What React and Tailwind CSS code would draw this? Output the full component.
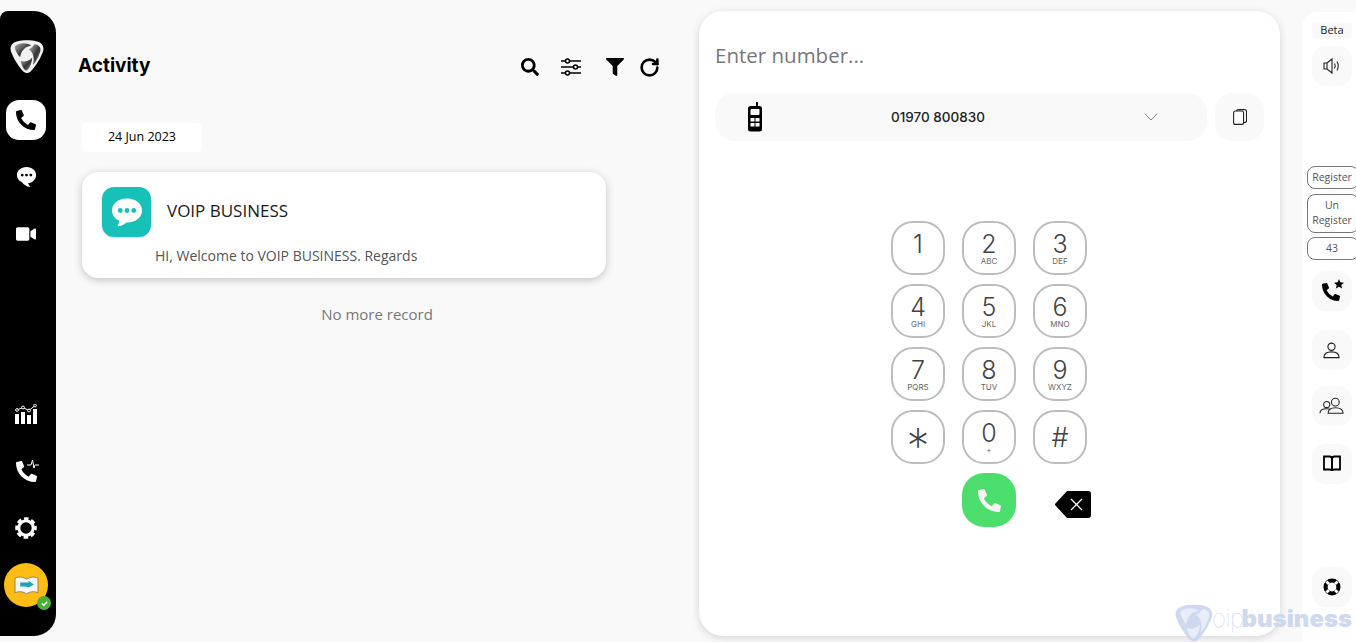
import { FaPhoneAlt, FaVideo, FaSearch, FaFilter } from 'react-icons/fa';
import { RotateCw, ChevronDown } from 'lucide-react';

const body = { fontFamily: '"Open Sans", "Noto Sans", sans-serif' };
const heading = { fontFamily: 'Inter, "Noto Sans", sans-serif' };

const keys = [
  ['1', '\u00a0'], ['2', 'ABC'], ['3', 'DEF'],
  ['4', 'GHI'], ['5', 'JKL'], ['6', 'MNO'],
  ['7', 'PQRS'], ['8', 'TUV'], ['9', 'WXYZ'],
  ['*', ''], ['0', '+'], ['#', ''],
];

// three blade logo, used in the sidebar and the watermark
const Logo = ({ className, light }) => (
  <svg viewBox="0 0 40 40" className={className}>
    <defs>
      <linearGradient id="blade" x1="0" y1="0" x2="1" y2="1">
        <stop offset="0" stopColor="#b5b5b5" />
        <stop offset="0.55" stopColor="#333" />
        <stop offset="1" stopColor="#999" />
      </linearGradient>
    </defs>
    <path
      d="M9 2 C15 0.500 25 0.500 31 2 C38 3.500 41 9 38.500 15 C35 24 29 33 24 38 C21.500 40 18.500 40 16 38 C11 33 5 24 1.500 15 C-1 9 2 3.500 9 2 Z"
      fill={light ? '#c9d5ef' : '#f2f2f2'}
    />
    <path d="M6 8 C10 3.500 20 3.500 25 7 C19 8 13 12 12 21 C9 18 5 12 6 8 Z" fill={light ? '#e6ecf9' : 'url(#blade)'} />
    <path d="M29 5.500 C35 6 37.500 11 35 16 C33 22 30 27 27 30 C29 23 28 15 22 11.500 C25 10.500 27 8 29 5.500 Z" fill={light ? '#e6ecf9' : 'url(#blade)'} />
    <path d="M12.500 25 C16 27 22 26 26 21.500 C26 27 23.500 33 20.500 36 C19 37 17.500 36 16 34 C14 31 13 28 12.500 25 Z" fill={light ? '#e6ecf9' : 'url(#blade)'} />
  </svg>
);

const ChatDots = ({ className, dot }) => (
  <svg viewBox="0 0 24 24" className={className}>
    <path d="M12 2 C18 2 22 5.800 22 10.500 C22 15.200 18 19 13.500 19 L16 23 C12 22.500 9 20.500 7.300 18 C4 16.600 2 13.800 2 10.500 C2 5.800 6 2 12 2 Z" fill="#fff" />
    <circle cx="7.500" cy="10.500" r="1.500" fill={dot} />
    <circle cx="12" cy="10.500" r="1.500" fill={dot} />
    <circle cx="16.500" cy="10.500" r="1.500" fill={dot} />
  </svg>
);

const Chart = () => (
  <svg viewBox="0 0 22 20" className="w-[22px] h-[20px]" fill="#fff">
    <rect x="0" y="10" width="4" height="10" />
    <rect x="6" y="8" width="4" height="12" />
    <rect x="12" y="11" width="4" height="9" />
    <rect x="18" y="5" width="4" height="15" />
    <path d="M2 6 L8 3.500 L14 6.500 L20 1.500" stroke="#fff" strokeWidth="1" fill="none" />
    <circle cx="2" cy="6" r="1.400" fill="#000" stroke="#fff" />
    <circle cx="8" cy="3.500" r="1.400" fill="#000" stroke="#fff" />
    <circle cx="14" cy="6.500" r="1.400" fill="#000" stroke="#fff" />
    <circle cx="20" cy="1.500" r="1.400" fill="#000" stroke="#fff" />
  </svg>
);

const Gear = () => (
  <svg viewBox="0 0 22 22" className="w-[22px] h-[22px]" fill="none" stroke="#fff">
    <circle cx="11" cy="11" r="7.200" strokeWidth="3" />
    <circle cx="11" cy="11" r="9.300" strokeWidth="3" strokeDasharray="4.500 2.800" strokeDashoffset="2.250" />
  </svg>
);

const SideItem = ({ className, children }) => (
  <div className={`flex items-center justify-center ${className}`}>{children}</div>
);

const Sidebar = () => (
  <aside className="w-[56px] h-[625px] mt-[11px] bg-black rounded-tl-lg rounded-tr-[22px] rounded-br-[22px] flex flex-col items-center shrink-0 pr-[4px]">
    <SideItem className="mt-[28px] h-[34px] w-[34px] ml-[2px]">
      <Logo className="w-[35px] h-[35px]" />
    </SideItem>
    <SideItem className="mt-[27px] w-[40px] h-[40px] bg-white rounded-[13px]">
      <FaPhoneAlt className="text-[20px] text-black" />
    </SideItem>
    <SideItem className="mt-[24px] h-[24px] w-[24px]">
      <ChatDots className="w-[23px] h-[23px]" dot="#000" />
    </SideItem>
    <SideItem className="mt-[34px] h-[24px] w-[24px]">
      <FaVideo className="text-[20px] text-white" />
    </SideItem>
    <SideItem className="mt-[156px] h-[24px] w-[24px]">
      <Chart />
    </SideItem>
    <SideItem className="mt-[33px] h-[24px] w-[24px] relative">
      <FaPhoneAlt className="text-[21px] text-white" />
      <svg viewBox="0 0 12 12" className="absolute -top-[1px] -right-[1px] w-[12px] h-[12px]">
        <path d="M0 7 L4 7 L5.500 2 L7 10 L8 7 L12 7" stroke="#fff" strokeWidth="1" fill="none" />
      </svg>
    </SideItem>
    <SideItem className="mt-[33px] h-[24px] w-[24px]">
      <Gear />
    </SideItem>
    <div className="mt-[23px] relative w-[44px] h-[44px] rounded-full bg-[#fdbd13] flex items-center justify-center">
      <svg viewBox="0 0 24 20" className="w-[25px] h-[21px]">
        <path d="M1 3 C5 1 9 2 12 4 C15 2 19 1 23 3 L23 17 C19 15 15 16 12 18 C9 16 5 15 1 17 Z" fill="#f5f5f5" stroke="#555" strokeWidth="0.6" />
        <path d="M6 7 L14 7 L14 5.500 L19 9 L14 12 L11 11 L6 11 Z" fill="#17a7b8" />
      </svg>
      <div className="absolute -right-[3px] bottom-[-3px] w-[14px] h-[14px] rounded-full bg-[#4caf3a] flex items-center justify-center">
        <svg viewBox="0 0 10 10" className="w-[9px] h-[9px]">
          <path d="M2 5 L4.200 7 L8 3" stroke="#fff" strokeWidth="1.400" fill="none" />
        </svg>
      </div>
    </div>
  </aside>
);

const SlidersIcon = () => (
  <svg viewBox="0 0 20 18" className="w-[20px] h-[18px]" fill="none" stroke="#000" strokeWidth="1.500">
    <path d="M0 3 H4 M9 3 H20 M0 9 H12 M17 9 H20 M0 15 H4 M9 15 H20" />
    <circle cx="6.500" cy="3" r="2" />
    <circle cx="14.500" cy="9" r="2" />
    <circle cx="6.500" cy="15" r="2" />
  </svg>
);

const Activity = () => (
  <main className="w-[643px] shrink-0 pl-[22px]" style={body}>
    <header className="flex items-center h-[30px] mt-[51px]">
      <h1 className="text-[19px] font-bold text-black" style={heading}>Activity</h1>
      <div className="flex items-center ml-[371px] pt-[2px]">
        <FaSearch className="text-[18px] text-black" />
        <span className="ml-[22px]"><SlidersIcon /></span>
        <FaFilter className="ml-[25px] text-[18px] text-black" />
        <RotateCw className="ml-[15px] w-[21px] h-[21px] text-black" strokeWidth={3} />
      </div>
    </header>
    <div className="ml-[4px] mt-[42px] w-[120px] h-[29px] bg-white rounded-sm flex items-center justify-center text-[12.5px] font-medium text-black">
      24 Jun 2023
    </div>
    <article className="ml-[4px] mt-[20px] w-[524px] h-[106px] bg-white rounded-2xl shadow-[0_2px_8px_rgba(0,0,0,0.22)] pt-[15px] pl-[20px]">
      <div className="flex items-center">
        <div className="w-[49px] h-[50px] rounded-xl bg-[#17c1b8] flex items-center justify-center shadow-sm">
          <svg viewBox="0 0 24 24" className="w-[36px] h-[36px]">
            <path d="M12 3 C18 3 22 6.500 22 11 C22 15.500 18 19 12 19 L11.500 19 C10 20.500 8 21.500 5.500 21.500 C6.300 20.500 6.800 19 6.700 17.800 C3.800 16.400 2 13.900 2 11 C2 6.500 6 3 12 3 Z" fill="#fff" />
            <circle cx="7.500" cy="11" r="1.600" fill="#17c1b8" />
            <circle cx="12" cy="11" r="1.600" fill="#17c1b8" />
            <circle cx="16.500" cy="11" r="1.600" fill="#17c1b8" />
          </svg>
        </div>
        <span className="ml-[16px] text-[17px] font-medium text-[#1a1a1a] -mt-[2px]">VOIP BUSINESS</span>
      </div>
      <p className="ml-[53px] mt-[8px] text-[14px] text-[#555]">HI, Welcome to VOIP BUSINESS. Regards</p>
    </article>
    <p className="mt-[25px] ml-[4px] w-[590px] text-center text-[15px] text-[#777]">No more record</p>
  </main>
);

const CandyPhone = () => (
  <svg viewBox="0 0 16 30" className="w-[16px] h-[30px]">
    <rect x="9" y="0" width="2" height="6" fill="#000" />
    <rect x="1" y="4" width="14" height="25.500" rx="2.500" fill="#000" />
    <rect x="3.500" y="7" width="9" height="6" rx="1" fill="#fff" />
    <rect x="3.500" y="16" width="4" height="3.500" fill="#fff" />
    <rect x="8.500" y="16" width="4" height="3.500" fill="#fff" />
    <rect x="3.500" y="21" width="4" height="3.500" fill="#fff" />
    <rect x="8.500" y="21" width="4" height="3.500" fill="#fff" />
  </svg>
);

const Key = ({ digit, sub }) => (
  <button className="w-[54px] h-[54px] rounded-[22px] border-2 border-[#bcbcbc] bg-white flex flex-col items-center justify-center text-[#444] pt-[2px]" style={{ fontFamily: 'Inter, sans-serif' }}>
    {digit === '*' ? (
      <span className="font-extralight text-[46px] h-[24px] leading-[24px] pt-[7px]">*</span>
    ) : (
      <span className={`font-light leading-[24px] ${digit === '#' ? 'text-[27px]' : 'text-[25px]'}`}>{digit}</span>
    )}
    {sub && <span className="text-[8px] leading-[9px] mt-[1px] text-[#666]">{sub}</span>}
  </button>
);

const Dialer = () => (
  <section className="w-[581px] h-[625px] mt-[11px] bg-white rounded-[24px] shadow-[0_2px_8px_rgba(0,0,0,0.15)] shrink-0 px-[16px] pt-[30px]" style={body}>
    <div className="h-[28px] flex items-center text-[20.5px] text-[#777]">Enter number...</div>
    <div className="mt-[24px] flex gap-[8px]">
      <div className="flex-1 h-[48px] bg-[#f9f9f9] rounded-[20px] flex items-center pl-[32px] pr-[44px]">
        <CandyPhone />
        <span className="flex-1 text-center text-[13.5px] font-medium text-[#222] mr-[26px]" style={heading}>01970 800830</span>
        <ChevronDown className="w-[24px] h-[24px] text-[#666]" strokeWidth={0.8} />
      </div>
      <div className="w-[49px] h-[48px] bg-[#f9f9f9] rounded-[18px] flex items-center justify-center">
        <svg viewBox="0 0 14 16" className="w-[14px] h-[16px]" fill="#fff" stroke="#222" strokeWidth="1.100">
          <rect x="3.500" y="0.600" width="10" height="13" rx="2" />
          <rect x="0.600" y="2" width="10" height="13.400" rx="2" />
        </svg>
      </div>
    </div>
    <div className="mt-[80px] ml-[176px] w-[196px] grid grid-cols-[54px_54px_54px] gap-x-[17px] gap-y-[9px]">
      {keys.map(([digit, sub]) => (
        <Key key={digit} digit={digit} sub={sub} />
      ))}
      <button className="col-start-2 w-[54px] h-[54px] rounded-[22px] bg-[#4cde6c] flex items-center justify-center">
        <FaPhoneAlt className="text-[23px] text-[#f3f3f3]" />
      </button>
      <div className="flex items-center ml-[22px] pt-[9px]">
        <svg viewBox="0 0 36 27" className="w-[36px] h-[27px] shrink-0">
          <path d="M12 0 H33 Q36 0 36 3 V24 Q36 27 33 27 H12 L0 14 Q-0.500 13.500 0 13 Z" fill="#000" />
          <path d="M16 8 L27 19 M27 8 L16 19" stroke="#fff" strokeWidth="1.300" />
        </svg>
      </div>
    </div>
  </section>
);

const RailButton = ({ className = '', children }) => (
  <div className={`w-[40px] h-[40px] ml-[10px] bg-[#f9f9f9] rounded-[14px] flex items-center justify-center ${className}`}>
    {children}
  </div>
);

const Pill = ({ className = '', children }) => (
  <div className={`w-[52px] ml-[5px] pr-[2px] border border-[#777] rounded-[8px] text-center text-[10.5px] leading-[15px] text-[#555] shrink-0 ${className}`}>
    {children}
  </div>
);

const StarPhone = () => (
  <div className="relative w-[20px] h-[20px]">
    <FaPhoneAlt className="text-[18px] text-black absolute left-0 bottom-0" />
    <svg viewBox="0 0 10 10" className="absolute -top-[2px] -right-[2px] w-[10px] h-[10px]">
      <path d="M5 0 L6.400 3.300 L10 3.700 L7.300 6 L8.100 9.500 L5 7.700 L1.900 9.500 L2.700 6 L0 3.700 L3.600 3.300 Z" fill="#000" />
    </svg>
  </div>
);

const Person = () => (
  <svg viewBox="0 0 18 18" className="w-[17px] h-[17px] -ml-[1px]" fill="none" stroke="#222" strokeWidth="1.200">
    <circle cx="9" cy="5" r="3.800" />
    <path d="M1 16.500 C1 12 5 10.500 9 10.500 C13 10.500 17 12 17 16.500 Z" />
  </svg>
);

const Group = () => (
  <svg viewBox="0 0 26 18" className="w-[25px] h-[18px] -ml-[1px]" fill="none" stroke="#222" strokeWidth="1.100">
    <circle cx="8" cy="7.500" r="3.200" />
    <path d="M1 16.500 C1 13 4 11.800 8 11.800 C10 11.800 11 12.200 12 13" />
    <circle cx="17" cy="5" r="4" />
    <path d="M9.500 16.500 C9.500 12 13 10.800 17 10.800 C21 10.800 25 12 25 16.500 Z" />
  </svg>
);

const Book = () => (
  <svg viewBox="0 0 18 18" className="w-[18px] h-[18px]" fill="none" stroke="#000" strokeWidth="1.800">
    <path d="M1 1.500 H6.500 Q9 1.500 9 4 V16 Q9 14.500 6.500 14.500 H1 Z" />
    <path d="M17 1.500 H11.500 Q9 1.500 9 4 V16 Q9 14.500 11.500 14.500 H17 Z" />
  </svg>
);

const Lifebuoy = () => (
  <svg viewBox="0 0 18 18" className="w-[18px] h-[18px]">
    <circle cx="9" cy="9" r="8.500" fill="#000" />
    <circle cx="9" cy="9" r="4.400" fill="#fff" />
    <path d="M3.400 3.400 L6 6 M14.600 3.400 L12 6 M3.400 14.600 L6 12 M14.600 14.600 L12 12" stroke="#fff" strokeWidth="2.800" />
  </svg>
);

const Rail = () => (
  <aside className="w-[54px] h-[630px] mt-[12px] ml-[22px] bg-white rounded-tl-[16px] flex flex-col shrink-0" style={body}>
    <div className="mt-[11px] ml-[10px] w-[40px] h-[15px] flex items-center justify-center text-[11px] font-medium text-[#222] bg-[#f9f9f9] rounded">Beta</div>
    <RailButton className="mt-[8px]">
      <svg viewBox="0 0 18 18" className="w-[18px] h-[18px]" fill="none" stroke="#222" strokeWidth="1.100">
        <path d="M1 6 H4 V12 H1 Z M4 6 L9 2 V16 L4 12" />
        <path d="M11.500 6.500 Q13 9 11.500 11.500 M14 4.500 Q16.500 9 14 13.500" />
      </svg>
    </RailButton>
    <Pill className="mt-[80px] h-[23px] leading-[20px]">Register</Pill>
    <Pill className="mt-[5px] h-[39px] pt-[3px]">Un<br />Register</Pill>
    <Pill className="mt-[4px] h-[23px] leading-[20px]">43</Pill>
    <RailButton className="mt-[11px]"><StarPhone /></RailButton>
    <RailButton className="mt-[19px]"><Person /></RailButton>
    <RailButton className="mt-[16px]"><Group /></RailButton>
    <RailButton className="mt-[18px]"><Book /></RailButton>
    <RailButton className="mt-[83px]"><Lifebuoy /></RailButton>
  </aside>
);

export default function App() {
  return (
    <div className="relative w-[1356px] h-[642px] overflow-hidden bg-[#f9f9f9] flex">
      <Sidebar />
      <Activity />
      <Dialer />
      <Rail />
      {/* watermark sits over the dial card and the rail */}
      <div className="absolute left-[1175px] top-[604px] flex items-center text-[#c9d5ef] opacity-90">
        <Logo className="w-[38px] h-[38px]" light />
        <span className="text-[24px] font-thin -ml-[1px] -mt-[8px] tracking-[-0.5px]" style={{ fontFamily: 'Inter, sans-serif' }}>oip</span>
        <span className="text-[24px] font-black -mt-[8px] -ml-[2px]" style={{ fontFamily: 'Inter, sans-serif' }}>business</span>
      </div>
    </div>
  );
}
